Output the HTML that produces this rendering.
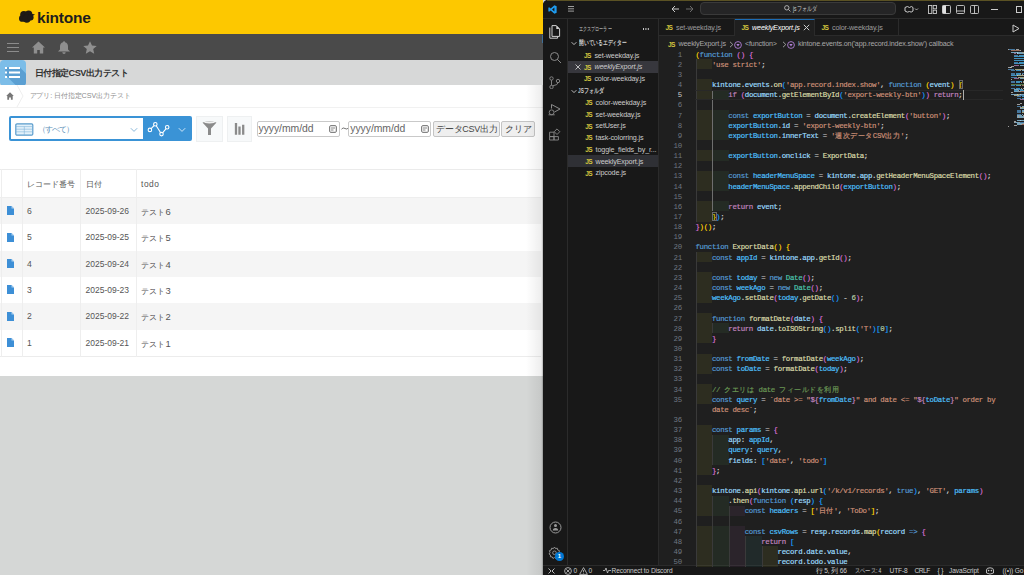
<!DOCTYPE html>
<html><head><meta charset="utf-8">
<style>
*{box-sizing:border-box;margin:0;padding:0}
html,body{width:1024px;height:575px;overflow:hidden;background:#d5d7d6;font-family:"Liberation Sans",sans-serif}
.a{position:absolute}
#kt{position:absolute;left:0;top:0;width:543px;height:575px;background:#d5d7d6;overflow:hidden}
#hdr{left:0;top:0;width:543px;height:34px;background:#fdc800}
#nav{left:0;top:34px;width:543px;height:26px;background:#4a4a4a}
#ttl{left:0;top:60px;width:543px;height:25px;background:#d7d8d8;overflow:hidden}
#wht{left:0;top:85px;width:543px;height:290.6px;background:#fff}
.bc{color:#9b9b9b;font-size:7.6px}
.tb td{}
.mono{font-family:"Liberation Mono",monospace}

#vs{position:absolute;left:543px;top:0;width:481px;height:575px;background:#1f1f1f;overflow:hidden;border-top-left-radius:5px}
.mono{font-family:"Liberation Mono",monospace}
.ln{left:655px;width:26.8px;text-align:right;font-size:7.400px;letter-spacing:-0.330px;line-height:10.15px;white-space:pre}
.ui{font-family:"Liberation Sans",sans-serif}
.jsi{font-family:"Liberation Sans",sans-serif;font-weight:bold;font-size:6.6px;line-height:7px;color:#d2c53f;letter-spacing:-.55px}
.sb{font-size:7.2px;color:#cccccc;letter-spacing:-.15px;white-space:nowrap}
.tb{font-size:7.2px;letter-spacing:-.15px;white-space:nowrap}
.bcr{font-size:7.15px;color:#a9a9a9;letter-spacing:-.15px;white-space:nowrap}
.st{top:567.1px;font-size:6.6px;color:#cccccc;white-space:nowrap;letter-spacing:-.1px}
.cl{-webkit-text-stroke:.18px;left:695.5px;font-size:7.400px;letter-spacing:-0.330px;line-height:10.15px;white-space:pre;color:#d4d4d4}
</style></head><body>
<div id="kt">
  <div id="hdr" class="a">
    <svg class="a" style="left:18px;top:10px" width="18" height="14" viewBox="0 0 18 14"><g fill="#1e1a16"><circle cx="5.8" cy="4.6" r="3.6"/><circle cx="10.6" cy="4.2" r="3.7"/><circle cx="4.4" cy="8.4" r="3.4"/><circle cx="8.8" cy="8.6" r="4.2"/><circle cx="12.6" cy="7.6" r="3"/><path d="M12.5 3.5L17 4.5 13 7Z"/></g></svg>
    <div class="a" style="left:37px;top:8.5px;font-size:15.5px;font-weight:bold;color:#1e1e1e;letter-spacing:-0.2px">kintone</div>
  </div>
  <div id="nav" class="a">
    <div class="a" style="left:7px;top:42.5px;margin-top:-34px;width:12px;height:1.5px;background:#8c8c8c;box-shadow:0 4px 0 #8c8c8c,0 8px 0 #8c8c8c"></div>
    <svg class="a" style="left:32px;top:7px" width="13" height="13" viewBox="0 0 13 13"><path d="M6.5 .5L0 6.5h1.8V12.5h3.4V9h2.6v3.5h3.4V6.5H13Z" fill="#8f8f8f"/></svg>
    <svg class="a" style="left:58px;top:7px" width="12" height="13" viewBox="0 0 12 13"><path d="M6 .3c.6 0 1 .4 1 .9 2 .5 3 2.2 3 4.2v3L12 10.5H0L2 8.4v-3c0-2 1-3.7 3-4.2 0-.5.4-.9 1-.9ZM4.3 11.3h3.4A1.7 1.7 0 0 1 4.3 11.3Z" fill="#8f8f8f"/></svg>
    <svg class="a" style="left:83px;top:6.5px" width="14" height="13" viewBox="0 0 14 13"><path d="M7 .3l2 4.2 4.7.5-3.5 3.1 1 4.6L7 10.3 2.8 12.7l1-4.6L.3 5l4.7-.5Z" fill="#8f8f8f"/></svg>
  </div>
  <div id="ttl" class="a">
    <div class="a" style="left:0;top:0;width:25.6px;height:25.5px;background:#7cbde8;border-radius:4px;overflow:hidden">
      <svg class="a" style="left:-4px;top:-4px" width="30" height="30" viewBox="0 0 30 30"><path d="M9.2 11.2H23.8L30 17.4V30H20.5L9.2 18.7Z" fill="#5b9fd2"/></svg>
      <div class="a" style="left:5.2px;top:7.2px;width:2.3px;height:2.3px;background:#fff;box-shadow:0 4.5px 0 #fff,0 9px 0 #fff"></div>
      <div class="a" style="left:8.8px;top:7.2px;width:11px;height:2.3px;background:#fff;box-shadow:0 4.5px 0 #fff,0 9px 0 #fff"></div>
    </div>
    <div class="a" style="left:34.8px;top:7.3px;font-size:9.2px;font-weight:bold;color:#333;letter-spacing:-0.55px">日付指定CSV出力テスト</div>
  </div>
  <div id="wht" class="a">
    <svg class="a" style="left:5.5px;top:7px" width="8" height="8" viewBox="0 0 8 8"><path d="M4 .3L.2 4H1.3V7.7H3.1V5.4H4.9V7.7H6.7V4H7.8Z" fill="#777"/></svg>
    <svg class="a" style="left:16px;top:0" width="9" height="22" viewBox="0 0 9 22"><path d="M1 0L7 11 1 22" fill="none" stroke="#eee" stroke-width="1"/></svg>
    <div class="a bc" style="left:29.5px;top:5.6px;font-size:7.2px;letter-spacing:-0.1px;color:#8c8c8c">アプリ: 日付指定CSV出力テスト</div>
    <div class="a" style="left:0;top:21.5px;width:543px;height:1px;background:#f1f1f1"></div>
    <!-- view selector -->
    <div class="a" style="left:8.6px;top:31px;width:183.6px;height:25.2px;background:#3a93d6;border-radius:2px"></div>
    <div class="a" style="left:11px;top:33.3px;width:132.1px;height:20.7px;background:#fff"></div>
    <svg class="a" style="left:15px;top:37.6px" width="19" height="13" viewBox="0 0 19 13"><rect x=".8" y=".8" width="17" height="11.4" rx="1.2" fill="#e3f1fa" stroke="#5a9ccc" stroke-width="1.2"/><path d="M.8 3.6H17.8M.8 6.2H17.8M.8 8.8H17.8M9.3 3.6V12.2" stroke="#7fb3d9" stroke-width=".6"/></svg>
    <div class="a" style="left:37.5px;top:38.6px;font-size:8.4px;color:#5d8fb8;letter-spacing:-.9px">（すべて）</div>
    <svg class="a" style="left:130px;top:42px" width="8" height="6" viewBox="0 0 8 6"><path d="M.8 1.2L4 4.4 7.2 1.2" fill="none" stroke="#8ab8da" stroke-width="1"/></svg>
    <svg class="a" style="left:147px;top:37px" width="24" height="15" viewBox="0 0 24 15"><path d="M2.9 7.9L8.3 2.3 14.5 12.1 20.2 5.3" fill="none" stroke="#fff" stroke-width="1.1"/><g fill="#3a93d6" stroke="#fff" stroke-width="1.1"><circle cx="2.9" cy="7.9" r="1.75"/><circle cx="8.3" cy="2.3" r="1.75"/><circle cx="14.5" cy="12.1" r="1.75"/><circle cx="20.2" cy="5.3" r="1.75"/></g></svg>
    <svg class="a" style="left:177.5px;top:42px" width="8" height="6" viewBox="0 0 8 6"><path d="M.8 1.2L4 4.4 7.2 1.2" fill="none" stroke="#cfe6f7" stroke-width="1"/></svg>
    <!-- filter & graph -->
    <div class="a" style="left:196px;top:31px;width:26.6px;height:25.5px;background:#f7f9fa;border:1px solid #eef0f1"></div>
    <svg class="a" style="left:202px;top:36px" width="15" height="15" viewBox="0 0 15 15"><path d="M.5 1.5Q7.5-.5 14.5 1.5L9 7.5V14H6V7.5Z" fill="#8b8b8b"/><ellipse cx="7.5" cy="1.6" rx="5.5" ry=".8" fill="#f2f2f2"/></svg>
    <div class="a" style="left:226.5px;top:31px;width:25.5px;height:25.5px;background:#f7f9fa;border:1px solid #eef0f1"></div>
    <svg class="a" style="left:233px;top:37px" width="12" height="14" viewBox="0 0 12 14"><path d="M3 1V12.7M6.5 4.4V12.7M10.2 2.7V12.7" stroke="#8b8b8b" stroke-width="2.3"/></svg>
    <!-- date inputs -->
    <div class="a" style="left:256.6px;top:35.5px;width:83px;height:16.3px;background:#fff;border:1px solid #c9c9c9;border-radius:2px"></div>
    <div class="a" style="left:258.5px;top:38.2px;font-size:10.4px;color:#666;letter-spacing:-.05px">yyyy/mm/dd</div>
    <svg class="a" style="left:329px;top:39.5px" width="8" height="8" viewBox="0 0 8 8"><rect x=".7" y=".7" width="6.6" height="6.6" rx="1" fill="none" stroke="#666" stroke-width="1"/><path d="M2 3H6M2 5H4.5" stroke="#666" stroke-width=".8"/></svg>
    <svg class="a" style="left:340.5px;top:41px" width="8" height="5" viewBox="0 0 8 5"><path d="M.5 3.2Q2 1 4 2.5T7.5 1.8" fill="none" stroke="#666" stroke-width=".9"/></svg>
    <div class="a" style="left:348.4px;top:35.5px;width:83px;height:16.3px;background:#fff;border:1px solid #c9c9c9;border-radius:2px"></div>
    <div class="a" style="left:350.3px;top:38.2px;font-size:10.4px;color:#666;letter-spacing:-.05px">yyyy/mm/dd</div>
    <svg class="a" style="left:421px;top:39.5px" width="8" height="8" viewBox="0 0 8 8"><rect x=".7" y=".7" width="6.6" height="6.6" rx="1" fill="none" stroke="#666" stroke-width="1"/><path d="M2 3H6M2 5H4.5" stroke="#666" stroke-width=".8"/></svg>
    <div class="a" style="left:432.9px;top:35.6px;width:67.4px;height:16px;background:#efefef;border:1px solid #c4c4c4;border-radius:2px"></div>
    <div class="a" style="left:436px;top:38.2px;font-size:9px;color:#444;letter-spacing:-.25px">データCSV出力</div>
    <div class="a" style="left:500.8px;top:35.6px;width:33.8px;height:16px;background:#efefef;border:1px solid #c4c4c4;border-radius:2px"></div>
    <div class="a" style="left:504.5px;top:38.2px;font-size:9px;color:#444">クリア</div>
    <!-- table -->
    <div class="a" style="left:0;top:83.5px;width:543px;height:1.5px;background:#ebebeb"></div>
    <div class="a" style="left:0;top:112.3px;width:541px;height:1px;background:#eeeeee"></div>
    <div class="a" style="left:27px;top:94px;font-size:7.8px;color:#555">レコード番号</div>
    <div class="a" style="left:85.5px;top:94px;font-size:7.8px;color:#555">日付</div>
    <div class="a" style="left:141px;top:93.7px;font-size:8.4px;color:#555;letter-spacing:.55px">todo</div>
    <div class="a" style="left:0;top:113.00px;width:541px;height:26.33px;background:#f5f5f5"></div>
    <svg class="a" style="left:6.5px;top:121.30px" width="7" height="9" viewBox="0 0 7 9"><path d="M0 0H4.5L7 2.5V9H0Z" fill="#3d8fd6"/><path d="M4.5 0V2.5H7" fill="#a9d0f0"/></svg>
    <div class="a" style="left:27px;top:121.00px;font-size:8.6px;color:#555">6</div>
    <div class="a" style="left:85.5px;top:121.10px;font-size:8.5px;color:#555">2025-09-26</div>
    <div class="a" style="left:141px;top:121.00px;font-size:7.8px;color:#555">テスト<span style="font-size:9.4px;margin-left:.5px">6</span></div>
    <div class="a" style="left:0;top:139.33px;width:541px;height:26.33px;background:#fff"></div>
    <svg class="a" style="left:6.5px;top:147.63px" width="7" height="9" viewBox="0 0 7 9"><path d="M0 0H4.5L7 2.5V9H0Z" fill="#3d8fd6"/><path d="M4.5 0V2.5H7" fill="#a9d0f0"/></svg>
    <div class="a" style="left:27px;top:147.33px;font-size:8.6px;color:#555">5</div>
    <div class="a" style="left:85.5px;top:147.43px;font-size:8.5px;color:#555">2025-09-25</div>
    <div class="a" style="left:141px;top:147.33px;font-size:7.8px;color:#555">テスト<span style="font-size:9.4px;margin-left:.5px">5</span></div>
    <div class="a" style="left:0;top:165.66px;width:541px;height:26.33px;background:#f5f5f5"></div>
    <svg class="a" style="left:6.5px;top:173.96px" width="7" height="9" viewBox="0 0 7 9"><path d="M0 0H4.5L7 2.5V9H0Z" fill="#3d8fd6"/><path d="M4.5 0V2.5H7" fill="#a9d0f0"/></svg>
    <div class="a" style="left:27px;top:173.66px;font-size:8.6px;color:#555">4</div>
    <div class="a" style="left:85.5px;top:173.76px;font-size:8.5px;color:#555">2025-09-24</div>
    <div class="a" style="left:141px;top:173.66px;font-size:7.8px;color:#555">テスト<span style="font-size:9.4px;margin-left:.5px">4</span></div>
    <div class="a" style="left:0;top:191.99px;width:541px;height:26.33px;background:#fff"></div>
    <svg class="a" style="left:6.5px;top:200.29px" width="7" height="9" viewBox="0 0 7 9"><path d="M0 0H4.5L7 2.5V9H0Z" fill="#3d8fd6"/><path d="M4.5 0V2.5H7" fill="#a9d0f0"/></svg>
    <div class="a" style="left:27px;top:199.99px;font-size:8.6px;color:#555">3</div>
    <div class="a" style="left:85.5px;top:200.09px;font-size:8.5px;color:#555">2025-09-23</div>
    <div class="a" style="left:141px;top:199.99px;font-size:7.8px;color:#555">テスト<span style="font-size:9.4px;margin-left:.5px">3</span></div>
    <div class="a" style="left:0;top:218.32px;width:541px;height:26.33px;background:#f5f5f5"></div>
    <svg class="a" style="left:6.5px;top:226.62px" width="7" height="9" viewBox="0 0 7 9"><path d="M0 0H4.5L7 2.5V9H0Z" fill="#3d8fd6"/><path d="M4.5 0V2.5H7" fill="#a9d0f0"/></svg>
    <div class="a" style="left:27px;top:226.32px;font-size:8.6px;color:#555">2</div>
    <div class="a" style="left:85.5px;top:226.42px;font-size:8.5px;color:#555">2025-09-22</div>
    <div class="a" style="left:141px;top:226.32px;font-size:7.8px;color:#555">テスト<span style="font-size:9.4px;margin-left:.5px">2</span></div>
    <div class="a" style="left:0;top:244.65px;width:541px;height:26.33px;background:#fff"></div>
    <svg class="a" style="left:6.5px;top:252.95px" width="7" height="9" viewBox="0 0 7 9"><path d="M0 0H4.5L7 2.5V9H0Z" fill="#3d8fd6"/><path d="M4.5 0V2.5H7" fill="#a9d0f0"/></svg>
    <div class="a" style="left:27px;top:252.65px;font-size:8.6px;color:#555">1</div>
    <div class="a" style="left:85.5px;top:252.75px;font-size:8.5px;color:#555">2025-09-21</div>
    <div class="a" style="left:141px;top:252.65px;font-size:7.8px;color:#555">テスト<span style="font-size:9.4px;margin-left:.5px">1</span></div>
    <div class="a" style="left:0;top:271px;width:541px;height:1px;background:#ececec"></div>
    <div class="a" style="left:0.5px;top:84px;width:1px;height:187.5px;background:#eeeeee"></div>
    <div class="a" style="left:22px;top:84px;width:1px;height:187.5px;background:#eeeeee"></div>
    <div class="a" style="left:79.8px;top:84px;width:1px;height:187.5px;background:#eeeeee"></div>
    <div class="a" style="left:136.2px;top:84px;width:1px;height:187.5px;background:#eeeeee"></div>
  </div>
  <div id="shd" class="a" style="left:526px;top:85px;width:17px;height:490px;background:linear-gradient(90deg,rgba(0,0,0,0),rgba(0,0,0,.065) 90%,rgba(0,0,0,.3) 100%)"></div>
</div>

<div id="vs"></div>
<div class="a" style="left:543px;top:0;width:481px;height:18.7px;background:#181818;border-bottom:1px solid #2b2b2b;border-top-left-radius:5px"></div>
<div class="a" style="left:547px;top:0;width:477px;height:1px;background:#5b5224"></div>
<svg class="a" style="left:547.5px;top:4.6px" width="9" height="9" viewBox="0 0 100 100"><path d="M71 3L96 15V85L71 97 30 60 12 74 4 70V30L12 26 30 40ZM71 28L45 50 71 72Z" fill="#1f9cf0"/></svg>
<div class="a" style="left:567.8px;top:6.2px;width:6.5px;height:1px;background:#9d9d9d;box-shadow:0 2.3px 0 #9d9d9d,0 4.6px 0 #9d9d9d"></div>
<svg class="a" style="left:671px;top:5px" width="9" height="8" viewBox="0 0 9 8"><path d="M8 4H1.2M4 1L1 4 4 7" fill="none" stroke="#cccccc" stroke-width="1"/></svg>
<svg class="a" style="left:685px;top:5px" width="9" height="8" viewBox="0 0 9 8"><path d="M1 4H7.8M5 1L8 4 5 7" fill="none" stroke="#6b6b6b" stroke-width="1"/></svg>
<div class="a" style="left:700.3px;top:2.2px;width:196px;height:13px;background:#252526;border:1px solid #3a3a3a;border-radius:4px"></div>
<svg class="a" style="left:783.5px;top:5.3px" width="7" height="7" viewBox="0 0 7 7"><circle cx="2.8" cy="2.8" r="2.2" fill="none" stroke="#bbb" stroke-width=".9"/><path d="M4.4 4.4L6.4 6.4" stroke="#bbb" stroke-width=".9"/></svg>
<div class="a ui" style="left:793px;top:4px;font-size:6.8px;color:#cccccc;transform:scaleX(.72);transform-origin:0 0;white-space:nowrap">jsフォルダ</div>
<svg class="a" style="left:903px;top:4.5px" width="16" height="9" viewBox="0 0 16 9"><path d="M2 2.5Q4.5 .5 6.5 2.5 8.5 .5 10 2.5V6Q8 8 6.5 6.5 4.5 8 2 6Z" fill="none" stroke="#cccccc" stroke-width="1"/><path d="M12 3.5L13.5 5 15 3.5" fill="none" stroke="#cccccc" stroke-width=".8"/></svg>
<svg class="a" style="left:927.5px;top:4.8px" width="9" height="9" viewBox="0 0 9 9"><rect x=".5" y=".5" width="3.3" height="8" fill="none" stroke="#ccc" stroke-width=".9"/><rect x="5.2" y=".5" width="3.3" height="3.3" fill="none" stroke="#ccc" stroke-width=".9"/><rect x="5.2" y="5.2" width="3.3" height="3.3" fill="none" stroke="#ccc" stroke-width=".9"/></svg>
<svg class="a" style="left:941.5px;top:4.8px" width="9" height="9" viewBox="0 0 9 9"><rect x=".5" y=".5" width="8" height="8" rx="1" fill="none" stroke="#ccc" stroke-width=".9"/><rect x=".5" y=".5" width="3.5" height="8" fill="#e0e0e0"/></svg>
<svg class="a" style="left:955.5px;top:4.8px" width="9" height="9" viewBox="0 0 9 9"><rect x=".5" y=".5" width="8" height="8" rx="1" fill="none" stroke="#ccc" stroke-width=".9"/><path d="M.5 6H8.5" stroke="#ccc" stroke-width=".9"/></svg>
<svg class="a" style="left:969.5px;top:4.8px" width="9" height="9" viewBox="0 0 9 9"><rect x=".5" y=".5" width="8" height="8" rx="1" fill="none" stroke="#ccc" stroke-width=".9"/><path d="M4.5 .5V8.5" stroke="#ccc" stroke-width=".9"/></svg>
<div class="a" style="left:990.5px;top:8.5px;width:7px;height:.9px;background:#ccc"></div>
<div class="a" style="left:1015.7px;top:6px;width:6.5px;height:6.5px;border:.9px solid #ccc"></div>
<div class="a" style="left:543px;top:18.7px;width:24.6px;height:547px;background:#181818;border-right:1px solid #2b2b2b"></div>
<div class="a" style="left:542.3px;top:34.6px;width:1px;height:8.5px;background:#3f6f98"></div>
<svg class="a" style="left:548px;top:24.5px" width="13" height="14" viewBox="0 0 13 14"><path d="M4 .6H8.3L11.6 3.9V11.4H4Z" fill="none" stroke="#d0d0d0" stroke-width="1"/><path d="M8.3 .6V3.9H11.6Z" fill="#d0d0d0"/><path d="M1.8 2.6V13.2H9.6V11.4" fill="none" stroke="#d0d0d0" stroke-width="1"/></svg>
<svg class="a" style="left:548.5px;top:50.5px" width="13" height="13" viewBox="0 0 13 13"><circle cx="5.5" cy="5.5" r="4" fill="none" stroke="#8b8b8b" stroke-width="1"/><path d="M8.3 8.3L12 12" stroke="#8b8b8b" stroke-width="1"/></svg>
<svg class="a" style="left:548px;top:76px" width="13" height="13" viewBox="0 0 13 13"><circle cx="3.5" cy="2.5" r="1.7" fill="none" stroke="#8b8b8b" stroke-width=".9"/><circle cx="3.5" cy="11" r="1.7" fill="none" stroke="#8b8b8b" stroke-width=".9"/><circle cx="10" cy="5" r="1.7" fill="none" stroke="#8b8b8b" stroke-width=".9"/><path d="M3.5 4.2V9.3M10 6.7Q10 9 4.8 9.8" fill="none" stroke="#8b8b8b" stroke-width=".9"/></svg>
<svg class="a" style="left:548px;top:103px" width="13" height="13" viewBox="0 0 13 13"><path d="M3.5 5.5V1.5L12 6 6.5 9" fill="none" stroke="#8b8b8b" stroke-width="1"/><circle cx="3.6" cy="9.3" r="2.4" fill="none" stroke="#8b8b8b" stroke-width=".9"/><path d="M.5 11.8H6.7" stroke="#8b8b8b" stroke-width=".9"/></svg>
<svg class="a" style="left:548px;top:127.5px" width="13" height="13" viewBox="0 0 13 13"><path d="M1.6 4.2H6V8.6H1.6ZM6 8.6H10.4V12H6ZM1.6 8.6H6V12H1.6ZM9 .9L11.8 3.7 9 6.5 6.2 3.7Z" fill="none" stroke="#8b8b8b" stroke-width=".9"/></svg>
<svg class="a" style="left:548.5px;top:520.5px" width="13" height="13" viewBox="0 0 13 13"><circle cx="6.5" cy="6.5" r="5.5" fill="none" stroke="#9a9a9a" stroke-width="1"/><circle cx="6.5" cy="4.6" r="1.5" fill="#9a9a9a"/><path d="M3.8 9.5Q3.8 7 6.5 7 9.2 7 9.2 9.5Z" fill="#9a9a9a"/></svg>
<svg class="a" style="left:548px;top:545.5px" width="13" height="13" viewBox="0 0 13 13"><path d="M6.5 1L7.5 2.6 9.3 2.2 9.7 4 11.5 4.7 11 6.5 12 8 10.4 9 10.5 10.8 8.7 10.9 7.9 12.5 6.5 11.4 5 12.5 4.2 10.9 2.4 10.8 2.5 9 1 8 2 6.5 1.4 4.7 3.2 4 3.6 2.2 5.4 2.6Z" fill="none" stroke="#9a9a9a" stroke-width=".9"/><circle cx="6.5" cy="6.8" r="1.8" fill="none" stroke="#9a9a9a" stroke-width=".9"/></svg>
<div class="a" style="left:554.8px;top:551.8px;width:9.2px;height:9.2px;border-radius:50%;background:#0078d4;color:#fff;font-size:6px;font-weight:bold;text-align:center;line-height:9.2px" class="ui">1</div>
<div class="a" style="left:568px;top:18.7px;width:90.6px;height:547px;background:#181818;border-right:1px solid #2b2b2b"></div>
<div class="a ui" style="left:578.8px;top:25px;font-size:6.2px;color:#cccccc;transform:scaleX(.68);transform-origin:0 0;white-space:nowrap">エクスプローラー</div>
<div class="a" style="left:643.3px;top:28.4px;width:1.2px;height:1.2px;background:#ccc;box-shadow:2.4px 0 0 #ccc,4.8px 0 0 #ccc"></div>
<svg class="a" style="left:570.5px;top:41px" width="6" height="5" viewBox="0 0 6 5"><path d="M.6 1.2L3 3.6 5.4 1.2" fill="none" stroke="#cccccc" stroke-width=".9"/></svg>
<div class="a ui" style="left:578.8px;top:39.3px;font-size:6.6px;font-weight:bold;color:#cccccc;transform:scaleX(.68);transform-origin:0 0;white-space:nowrap">開いているエディター</div>
<div class="a" style="left:568px;top:61px;width:90px;height:11.9px;background:#37373d"></div>
<svg class="a" style="left:574.5px;top:64px" width="6" height="6" viewBox="0 0 6 6"><path d="M.5 .5L5.5 5.5M5.5 .5L.5 5.5" stroke="#cccccc" stroke-width=".9"/></svg>
<div class="a jsi" style="left:584px;top:52.400000000000006px">JS</div>
<div class="a ui sb" style="left:594.4px;top:51.10px;">set-weekday.js</div>
<div class="a jsi" style="left:584px;top:63.7px">JS</div>
<div class="a ui sb" style="left:594.4px;top:62.40px;font-style:italic;">weeklyExport.js</div>
<div class="a jsi" style="left:584px;top:75.3px">JS</div>
<div class="a ui sb" style="left:594.4px;top:74.00px;">color-weekday.js</div>
<svg class="a" style="left:570.5px;top:89px" width="6" height="5" viewBox="0 0 6 5"><path d="M.6 1.2L3 3.6 5.4 1.2" fill="none" stroke="#cccccc" stroke-width=".9"/></svg>
<div class="a ui" style="left:578.3px;top:87.3px;font-size:6.6px;font-weight:bold;color:#cccccc;transform:scaleX(.72);transform-origin:0 0;white-space:nowrap">JSフォルダ</div>
<div class="a" style="left:568px;top:155.1px;width:90px;height:11.9px;background:#2f3035"></div>
<div class="a jsi" style="left:585.2px;top:99.3px">JS</div>
<div class="a ui sb" style="left:595.6px;top:98.00px">color-weekday.js</div>
<div class="a jsi" style="left:585.2px;top:111.03px">JS</div>
<div class="a ui sb" style="left:595.6px;top:109.73px">set-weekday.js</div>
<div class="a jsi" style="left:585.2px;top:122.76px">JS</div>
<div class="a ui sb" style="left:595.6px;top:121.46px">setUser.js</div>
<div class="a jsi" style="left:585.2px;top:134.48999999999998px">JS</div>
<div class="a ui sb" style="left:595.6px;top:133.19px">task-colorring.js</div>
<div class="a jsi" style="left:585.2px;top:146.21999999999997px">JS</div>
<div class="a ui sb" style="left:595.6px;top:144.92px">toggle_fields_by_r...</div>
<div class="a jsi" style="left:585.2px;top:157.95px">JS</div>
<div class="a ui sb" style="left:595.6px;top:156.65px">weeklyExport.js</div>
<div class="a jsi" style="left:585.2px;top:169.67999999999998px">JS</div>
<div class="a ui sb" style="left:595.6px;top:168.38px">zipcode.js</div>
<div class="a" style="left:658.6px;top:18.7px;width:365.4px;height:17px;background:#181818;border-bottom:1px solid #2b2b2b"></div>
<div class="a" style="left:658.6px;top:18.7px;width:76.7px;height:17px;border-right:1px solid #2b2b2b"></div>
<div class="a" style="left:735.3px;top:18.7px;width:80px;height:17px;background:#1f1f1f;border-top:1px solid #1c6cb5;border-right:1px solid #2b2b2b"></div>
<div class="a" style="left:815.3px;top:18.7px;width:83.5px;height:17px;border-right:1px solid #2b2b2b"></div>
<div class="a jsi" style="left:665.5px;top:23.8px">JS</div>
<div class="a ui tb" style="left:676px;top:22.5px;color:#9d9d9d">set-weekday.js</div>
<div class="a jsi" style="left:741.5px;top:23.8px">JS</div>
<div class="a ui tb" style="left:752px;top:22.5px;color:#ffffff;font-style:italic">weeklyExport.js</div>
<svg class="a" style="left:802.5px;top:24.3px" width="7" height="7" viewBox="0 0 7 7"><path d="M.8 .8L6.2 6.2M6.2 .8L.8 6.2" stroke="#cccccc" stroke-width="1"/></svg>
<div class="a jsi" style="left:821.5px;top:23.8px">JS</div>
<div class="a ui tb" style="left:832px;top:22.5px;color:#9d9d9d">color-weekday.js</div>
<svg class="a" style="left:1012px;top:23.5px" width="8" height="9" viewBox="0 0 8 9"><path d="M1 1L7 4.5 1 8Z" fill="none" stroke="#cccccc" stroke-width="1"/></svg>
<div class="a jsi" style="left:668px;top:41.2px">JS</div>
<div class="a ui bcr" style="left:678.5px;top:40.2px">weeklyExport.js</div>
<svg class="a" style="left:728.6px;top:40.6px" width="5" height="7" viewBox="0 0 5 7"><path d="M1 .8L3.8 3.5 1 6.2" fill="none" stroke="#a9a9a9" stroke-width=".9"/></svg>
<svg class="a" style="left:734px;top:40.6px" width="8" height="8" viewBox="0 0 8 8"><circle cx="4" cy="4" r="3.4" fill="none" stroke="#b180d7" stroke-width=".9"/><path d="M2.3 3H5.7L4 5.5Z" fill="#b180d7"/></svg>
<div class="a ui bcr" style="left:745px;top:40.2px">&lt;function&gt;</div>
<svg class="a" style="left:781.6px;top:40.6px" width="5" height="7" viewBox="0 0 5 7"><path d="M1 .8L3.8 3.5 1 6.2" fill="none" stroke="#a9a9a9" stroke-width=".9"/></svg>
<svg class="a" style="left:787px;top:40.6px" width="8" height="8" viewBox="0 0 8 8"><circle cx="4" cy="4" r="3.4" fill="none" stroke="#b180d7" stroke-width=".9"/><path d="M2.3 3H5.7L4 5.5Z" fill="#b180d7"/></svg>
<div class="a ui bcr" style="left:798px;top:40.2px">kintone.events.on('app.record.index.show') callback</div>
<div class="a" style="left:543px;top:565.4px;width:481px;height:9.6px;background:#181818;border-top:1px solid #2b2b2b"></div>
<svg class="a" style="left:547.5px;top:567.5px" width="7" height="6" viewBox="0 0 7 6"><path d="M.5 5.5L3 3 .5 .5M6.5 .5L4 3 6.5 5.5" fill="none" stroke="#ccc" stroke-width=".9"/></svg>
<svg class="a" style="left:564px;top:566.8px" width="8" height="8" viewBox="0 0 8 8"><circle cx="4" cy="4" r="3.4" fill="none" stroke="#ccc" stroke-width=".8"/><path d="M2.3 2.3L5.7 5.7M5.7 2.3L2.3 5.7" stroke="#ccc" stroke-width=".8"/></svg>
<div class="a ui st" style="left:573.5px">0</div>
<svg class="a" style="left:578.5px;top:566.6px" width="9" height="8" viewBox="0 0 9 8"><path d="M4.5 .6L8.4 7.4H.6Z" fill="none" stroke="#ccc" stroke-width=".8"/><path d="M4.5 3V5.3M4.5 6V6.6" stroke="#ccc" stroke-width=".7"/></svg>
<div class="a ui st" style="left:588.5px">0</div>
<svg class="a" style="left:602.5px;top:567.3px" width="8" height="7" viewBox="0 0 8 7"><path d="M0 3.5H2L3 1 4.5 6 5.5 3.5H8" fill="none" stroke="#ccc" stroke-width=".8"/></svg>
<div class="a ui st" style="left:611.5px">Reconnect to Discord</div>
<div class="a ui st" style="left:815.5px">行 5, 列 66</div>
<div class="a ui st" style="left:855px;transform:scaleX(.76);transform-origin:0 0">スペース: 4</div>
<div class="a ui st" style="left:889.5px">UTF-8</div>
<div class="a ui st" style="left:914.5px;letter-spacing:-.5px">CRLF</div>
<div class="a ui st" style="left:937.5px">{ }</div>
<div class="a ui st" style="left:949px">JavaScript</div>
<svg class="a" style="left:985px;top:566.5px" width="10" height="8" viewBox="0 0 10 8"><path d="M1.5 3Q1.5 .8 5 .8 8.5 .8 8.5 3V6Q5 8.2 1.5 6Z" fill="none" stroke="#ccc" stroke-width=".9"/><circle cx="3.6" cy="3.6" r=".8" fill="#ccc"/><circle cx="6.4" cy="3.6" r=".8" fill="#ccc"/></svg>
<div class="a ui st" style="left:1002.5px">((•)) Go</div><div class="a mono ln" style="top:49.60px;color:#6e7681">1</div>
<div class="a mono cl" style="top:49.60px"><span style="color:#ffd700">(</span><span style="color:#569cd6">function</span> <span style="color:#da70d6">(</span><span style="color:#da70d6">)</span> <span style="color:#da70d6">{</span></div>
<div class="a" style="left:696.00px;top:59px;width:16.44px;height:10px;background:rgba(255,255,64,0.065)"></div>
<div class="a" style="left:696px;top:59px;width:1px;height:10px;background:#3a3a3a"></div>
<div class="a mono ln" style="top:59.75px;color:#6e7681">2</div>
<div class="a mono cl" style="top:59.75px">    <span style="color:#ce9178">&#x27;use strict&#x27;</span>;</div>
<div class="a" style="left:696px;top:69px;width:1px;height:10px;background:#3a3a3a"></div>
<div class="a mono ln" style="top:69.90px;color:#6e7681">3</div>
<div class="a mono cl" style="top:69.90px"></div>
<div class="a" style="left:696.00px;top:79px;width:16.44px;height:11px;background:rgba(255,255,64,0.065)"></div>
<div class="a" style="left:696px;top:79px;width:1px;height:11px;background:#3a3a3a"></div>
<div class="a mono ln" style="top:80.05px;color:#6e7681">4</div>
<div class="a mono cl" style="top:80.05px">    <span style="color:#9cdcfe">kintone</span>.<span style="color:#9cdcfe">events</span>.<span style="color:#dcdcaa">on</span><span style="color:#179fff">(</span><span style="color:#ce9178">&#x27;app.record.index.show&#x27;</span>, <span style="color:#569cd6">function</span> <span style="color:#ffd700">(</span><span style="color:#9cdcfe">event</span><span style="color:#ffd700">)</span> <span style="color:#ffd700">{</span></div>
<div class="a" style="left:696.00px;top:90px;width:16.44px;height:10px;background:rgba(255,255,64,0.065)"></div>
<div class="a" style="left:712.44px;top:90px;width:16.44px;height:10px;background:rgba(127,255,127,0.055)"></div>
<div class="a" style="left:696px;top:90px;width:1px;height:10px;background:#3a3a3a"></div>
<div class="a" style="left:712px;top:90px;width:1px;height:10px;background:#6e6e6e"></div>
<div class="a mono ln" style="top:90.20px;color:#cccccc">5</div>
<div class="a mono cl" style="top:90.20px">        <span style="color:#c586c0">if</span> <span style="color:#da70d6">(</span><span style="color:#9cdcfe">document</span>.<span style="color:#dcdcaa">getElementById</span><span style="color:#179fff">(</span><span style="color:#ce9178">&#x27;export-weekly-btn&#x27;</span><span style="color:#179fff">)</span><span style="color:#da70d6">)</span> <span style="color:#c586c0">return</span>;</div>
<div class="a" style="left:696px;top:100px;width:1px;height:10px;background:#3a3a3a"></div>
<div class="a" style="left:712px;top:100px;width:1px;height:10px;background:#6e6e6e"></div>
<div class="a mono ln" style="top:100.35px;color:#6e7681">6</div>
<div class="a mono cl" style="top:100.35px"></div>
<div class="a" style="left:696.00px;top:110px;width:16.44px;height:10px;background:rgba(255,255,64,0.065)"></div>
<div class="a" style="left:712.44px;top:110px;width:16.44px;height:10px;background:rgba(127,255,127,0.055)"></div>
<div class="a" style="left:696px;top:110px;width:1px;height:10px;background:#3a3a3a"></div>
<div class="a" style="left:712px;top:110px;width:1px;height:10px;background:#6e6e6e"></div>
<div class="a mono ln" style="top:110.50px;color:#6e7681">7</div>
<div class="a mono cl" style="top:110.50px">        <span style="color:#569cd6">const</span> <span style="color:#4fc1ff">exportButton</span> = <span style="color:#9cdcfe">document</span>.<span style="color:#dcdcaa">createElement</span><span style="color:#da70d6">(</span><span style="color:#ce9178">&#x27;button&#x27;</span><span style="color:#da70d6">)</span>;</div>
<div class="a" style="left:696.00px;top:120px;width:16.44px;height:10px;background:rgba(255,255,64,0.065)"></div>
<div class="a" style="left:712.44px;top:120px;width:16.44px;height:10px;background:rgba(127,255,127,0.055)"></div>
<div class="a" style="left:696px;top:120px;width:1px;height:10px;background:#3a3a3a"></div>
<div class="a" style="left:712px;top:120px;width:1px;height:10px;background:#6e6e6e"></div>
<div class="a mono ln" style="top:120.65px;color:#6e7681">8</div>
<div class="a mono cl" style="top:120.65px">        <span style="color:#4fc1ff">exportButton</span>.<span style="color:#9cdcfe">id</span> = <span style="color:#ce9178">&#x27;export-weekly-btn&#x27;</span>;</div>
<div class="a" style="left:696.00px;top:130px;width:16.44px;height:10px;background:rgba(255,255,64,0.065)"></div>
<div class="a" style="left:712.44px;top:130px;width:16.44px;height:10px;background:rgba(127,255,127,0.055)"></div>
<div class="a" style="left:696px;top:130px;width:1px;height:10px;background:#3a3a3a"></div>
<div class="a" style="left:712px;top:130px;width:1px;height:10px;background:#6e6e6e"></div>
<div class="a mono ln" style="top:130.80px;color:#6e7681">9</div>
<div class="a mono cl" style="top:130.80px">        <span style="color:#4fc1ff">exportButton</span>.<span style="color:#9cdcfe">innerText</span> = <span style="color:#ce9178">&#x27;<span style="letter-spacing:.55px">週次データ</span>CSV<span style="letter-spacing:.55px">出力</span>&#x27;</span>;</div>
<div class="a" style="left:696px;top:140px;width:1px;height:10px;background:#3a3a3a"></div>
<div class="a" style="left:712px;top:140px;width:1px;height:10px;background:#6e6e6e"></div>
<div class="a mono ln" style="top:140.95px;color:#6e7681">10</div>
<div class="a mono cl" style="top:140.95px"></div>
<div class="a" style="left:696.00px;top:150px;width:16.44px;height:11px;background:rgba(255,255,64,0.065)"></div>
<div class="a" style="left:712.44px;top:150px;width:16.44px;height:11px;background:rgba(127,255,127,0.055)"></div>
<div class="a" style="left:696px;top:150px;width:1px;height:11px;background:#3a3a3a"></div>
<div class="a" style="left:712px;top:150px;width:1px;height:11px;background:#6e6e6e"></div>
<div class="a mono ln" style="top:151.10px;color:#6e7681">11</div>
<div class="a mono cl" style="top:151.10px">        <span style="color:#4fc1ff">exportButton</span>.<span style="color:#9cdcfe">onclick</span> = <span style="color:#dcdcaa">ExportData</span>;</div>
<div class="a" style="left:696px;top:161px;width:1px;height:10px;background:#3a3a3a"></div>
<div class="a" style="left:712px;top:161px;width:1px;height:10px;background:#6e6e6e"></div>
<div class="a mono ln" style="top:161.25px;color:#6e7681">12</div>
<div class="a mono cl" style="top:161.25px"></div>
<div class="a" style="left:696.00px;top:171px;width:16.44px;height:10px;background:rgba(255,255,64,0.065)"></div>
<div class="a" style="left:712.44px;top:171px;width:16.44px;height:10px;background:rgba(127,255,127,0.055)"></div>
<div class="a" style="left:696px;top:171px;width:1px;height:10px;background:#3a3a3a"></div>
<div class="a" style="left:712px;top:171px;width:1px;height:10px;background:#6e6e6e"></div>
<div class="a mono ln" style="top:171.40px;color:#6e7681">13</div>
<div class="a mono cl" style="top:171.40px">        <span style="color:#569cd6">const</span> <span style="color:#4fc1ff">headerMenuSpace</span> = <span style="color:#9cdcfe">kintone</span>.<span style="color:#9cdcfe">app</span>.<span style="color:#dcdcaa">getHeaderMenuSpaceElement</span><span style="color:#da70d6">(</span><span style="color:#da70d6">)</span>;</div>
<div class="a" style="left:696.00px;top:181px;width:16.44px;height:10px;background:rgba(255,255,64,0.065)"></div>
<div class="a" style="left:712.44px;top:181px;width:16.44px;height:10px;background:rgba(127,255,127,0.055)"></div>
<div class="a" style="left:696px;top:181px;width:1px;height:10px;background:#3a3a3a"></div>
<div class="a" style="left:712px;top:181px;width:1px;height:10px;background:#6e6e6e"></div>
<div class="a mono ln" style="top:181.55px;color:#6e7681">14</div>
<div class="a mono cl" style="top:181.55px">        <span style="color:#4fc1ff">headerMenuSpace</span>.<span style="color:#dcdcaa">appendChild</span><span style="color:#da70d6">(</span><span style="color:#4fc1ff">exportButton</span><span style="color:#da70d6">)</span>;</div>
<div class="a" style="left:696px;top:191px;width:1px;height:10px;background:#3a3a3a"></div>
<div class="a" style="left:712px;top:191px;width:1px;height:10px;background:#6e6e6e"></div>
<div class="a mono ln" style="top:191.70px;color:#6e7681">15</div>
<div class="a mono cl" style="top:191.70px"></div>
<div class="a" style="left:696.00px;top:201px;width:16.44px;height:10px;background:rgba(255,255,64,0.065)"></div>
<div class="a" style="left:712.44px;top:201px;width:16.44px;height:10px;background:rgba(127,255,127,0.055)"></div>
<div class="a" style="left:696px;top:201px;width:1px;height:10px;background:#3a3a3a"></div>
<div class="a" style="left:712px;top:201px;width:1px;height:10px;background:#6e6e6e"></div>
<div class="a mono ln" style="top:201.85px;color:#6e7681">16</div>
<div class="a mono cl" style="top:201.85px">        <span style="color:#c586c0">return</span> <span style="color:#9cdcfe">event</span>;</div>
<div class="a" style="left:696.00px;top:211px;width:16.44px;height:11px;background:rgba(255,255,64,0.065)"></div>
<div class="a" style="left:696px;top:211px;width:1px;height:11px;background:#3a3a3a"></div>
<div class="a mono ln" style="top:212.00px;color:#6e7681">17</div>
<div class="a mono cl" style="top:212.00px">    <span style="color:#ffd700">}</span><span style="color:#179fff">)</span>;</div>
<div class="a mono ln" style="top:222.15px;color:#6e7681">18</div>
<div class="a mono cl" style="top:222.15px"><span style="color:#da70d6">}</span><span style="color:#ffd700">)</span><span style="color:#ffd700">(</span><span style="color:#ffd700">)</span>;</div>
<div class="a mono ln" style="top:232.30px;color:#6e7681">19</div>
<div class="a mono cl" style="top:232.30px"></div>
<div class="a mono ln" style="top:242.45px;color:#6e7681">20</div>
<div class="a mono cl" style="top:242.45px"><span style="color:#569cd6">function</span> <span style="color:#dcdcaa">ExportData</span><span style="color:#ffd700">(</span><span style="color:#ffd700">)</span> <span style="color:#ffd700">{</span></div>
<div class="a" style="left:696.00px;top:252px;width:16.44px;height:10px;background:rgba(255,255,64,0.065)"></div>
<div class="a" style="left:696px;top:252px;width:1px;height:10px;background:#3a3a3a"></div>
<div class="a mono ln" style="top:252.60px;color:#6e7681">21</div>
<div class="a mono cl" style="top:252.60px">    <span style="color:#569cd6">const</span> <span style="color:#4fc1ff">appId</span> = <span style="color:#9cdcfe">kintone</span>.<span style="color:#9cdcfe">app</span>.<span style="color:#dcdcaa">getId</span><span style="color:#da70d6">(</span><span style="color:#da70d6">)</span>;</div>
<div class="a" style="left:696px;top:262px;width:1px;height:10px;background:#3a3a3a"></div>
<div class="a mono ln" style="top:262.75px;color:#6e7681">22</div>
<div class="a mono cl" style="top:262.75px"></div>
<div class="a" style="left:696.00px;top:272px;width:16.44px;height:10px;background:rgba(255,255,64,0.065)"></div>
<div class="a" style="left:696px;top:272px;width:1px;height:10px;background:#3a3a3a"></div>
<div class="a mono ln" style="top:272.90px;color:#6e7681">23</div>
<div class="a mono cl" style="top:272.90px">    <span style="color:#569cd6">const</span> <span style="color:#4fc1ff">today</span> = <span style="color:#569cd6">new</span> <span style="color:#4ec9b0">Date</span><span style="color:#da70d6">(</span><span style="color:#da70d6">)</span>;</div>
<div class="a" style="left:696.00px;top:282px;width:16.44px;height:11px;background:rgba(255,255,64,0.065)"></div>
<div class="a" style="left:696px;top:282px;width:1px;height:11px;background:#3a3a3a"></div>
<div class="a mono ln" style="top:283.05px;color:#6e7681">24</div>
<div class="a mono cl" style="top:283.05px">    <span style="color:#569cd6">const</span> <span style="color:#4fc1ff">weekAgo</span> = <span style="color:#569cd6">new</span> <span style="color:#4ec9b0">Date</span><span style="color:#da70d6">(</span><span style="color:#da70d6">)</span>;</div>
<div class="a" style="left:696.00px;top:293px;width:16.44px;height:10px;background:rgba(255,255,64,0.065)"></div>
<div class="a" style="left:696px;top:293px;width:1px;height:10px;background:#3a3a3a"></div>
<div class="a mono ln" style="top:293.20px;color:#6e7681">25</div>
<div class="a mono cl" style="top:293.20px">    <span style="color:#4fc1ff">weekAgo</span>.<span style="color:#dcdcaa">setDate</span><span style="color:#da70d6">(</span><span style="color:#4fc1ff">today</span>.<span style="color:#dcdcaa">getDate</span><span style="color:#179fff">(</span><span style="color:#179fff">)</span> - <span style="color:#b5cea8">6</span><span style="color:#da70d6">)</span>;</div>
<div class="a" style="left:696px;top:303px;width:1px;height:10px;background:#3a3a3a"></div>
<div class="a mono ln" style="top:303.35px;color:#6e7681">26</div>
<div class="a mono cl" style="top:303.35px"></div>
<div class="a" style="left:696.00px;top:313px;width:16.44px;height:10px;background:rgba(255,255,64,0.065)"></div>
<div class="a" style="left:696px;top:313px;width:1px;height:10px;background:#3a3a3a"></div>
<div class="a mono ln" style="top:313.50px;color:#6e7681">27</div>
<div class="a mono cl" style="top:313.50px">    <span style="color:#569cd6">function</span> <span style="color:#dcdcaa">formatDate</span><span style="color:#da70d6">(</span><span style="color:#9cdcfe">date</span><span style="color:#da70d6">)</span> <span style="color:#da70d6">{</span></div>
<div class="a" style="left:696.00px;top:323px;width:16.44px;height:10px;background:rgba(255,255,64,0.065)"></div>
<div class="a" style="left:712.44px;top:323px;width:16.44px;height:10px;background:rgba(127,255,127,0.055)"></div>
<div class="a" style="left:696px;top:323px;width:1px;height:10px;background:#3a3a3a"></div>
<div class="a" style="left:712px;top:323px;width:1px;height:10px;background:#3a3a3a"></div>
<div class="a mono ln" style="top:323.65px;color:#6e7681">28</div>
<div class="a mono cl" style="top:323.65px">        <span style="color:#c586c0">return</span> <span style="color:#9cdcfe">date</span>.<span style="color:#dcdcaa">toISOString</span><span style="color:#179fff">(</span><span style="color:#179fff">)</span>.<span style="color:#dcdcaa">split</span><span style="color:#179fff">(</span><span style="color:#ce9178">&#x27;T&#x27;</span><span style="color:#179fff">)</span><span style="color:#179fff">[</span><span style="color:#b5cea8">0</span><span style="color:#179fff">]</span>;</div>
<div class="a" style="left:696.00px;top:333px;width:16.44px;height:10px;background:rgba(255,255,64,0.065)"></div>
<div class="a" style="left:696px;top:333px;width:1px;height:10px;background:#3a3a3a"></div>
<div class="a mono ln" style="top:333.80px;color:#6e7681">29</div>
<div class="a mono cl" style="top:333.80px">    <span style="color:#da70d6">}</span></div>
<div class="a" style="left:696px;top:343px;width:1px;height:11px;background:#3a3a3a"></div>
<div class="a mono ln" style="top:343.95px;color:#6e7681">30</div>
<div class="a mono cl" style="top:343.95px"></div>
<div class="a" style="left:696.00px;top:354px;width:16.44px;height:10px;background:rgba(255,255,64,0.065)"></div>
<div class="a" style="left:696px;top:354px;width:1px;height:10px;background:#3a3a3a"></div>
<div class="a mono ln" style="top:354.10px;color:#6e7681">31</div>
<div class="a mono cl" style="top:354.10px">    <span style="color:#569cd6">const</span> <span style="color:#4fc1ff">fromDate</span> = <span style="color:#dcdcaa">formatDate</span><span style="color:#da70d6">(</span><span style="color:#4fc1ff">weekAgo</span><span style="color:#da70d6">)</span>;</div>
<div class="a" style="left:696.00px;top:364px;width:16.44px;height:10px;background:rgba(255,255,64,0.065)"></div>
<div class="a" style="left:696px;top:364px;width:1px;height:10px;background:#3a3a3a"></div>
<div class="a mono ln" style="top:364.25px;color:#6e7681">32</div>
<div class="a mono cl" style="top:364.25px">    <span style="color:#569cd6">const</span> <span style="color:#4fc1ff">toDate</span> = <span style="color:#dcdcaa">formatDate</span><span style="color:#da70d6">(</span><span style="color:#4fc1ff">today</span><span style="color:#da70d6">)</span>;</div>
<div class="a" style="left:696px;top:374px;width:1px;height:10px;background:#3a3a3a"></div>
<div class="a mono ln" style="top:374.40px;color:#6e7681">33</div>
<div class="a mono cl" style="top:374.40px"></div>
<div class="a" style="left:696.00px;top:384px;width:16.44px;height:10px;background:rgba(255,255,64,0.065)"></div>
<div class="a" style="left:696px;top:384px;width:1px;height:10px;background:#3a3a3a"></div>
<div class="a mono ln" style="top:384.55px;color:#6e7681">34</div>
<div class="a mono cl" style="top:384.55px">    <span style="color:#6a9955">// <span style="letter-spacing:.55px">クエリは</span> date <span style="letter-spacing:.55px">フィールドを利用</span></span></div>
<div class="a" style="left:696.00px;top:394px;width:16.44px;height:10px;background:rgba(255,255,64,0.065)"></div>
<div class="a" style="left:696px;top:394px;width:1px;height:10px;background:#3a3a3a"></div>
<div class="a mono ln" style="top:394.70px;color:#6e7681">35</div>
<div class="a mono cl" style="top:394.70px">    <span style="color:#569cd6">const</span> <span style="color:#4fc1ff">query</span> = <span style="color:#ce9178">`date &gt;= &quot;</span><span style="color:#c586c0">${</span><span style="color:#4fc1ff">fromDate</span><span style="color:#c586c0">}</span><span style="color:#ce9178">&quot; and date &lt;= &quot;</span><span style="color:#c586c0">${</span><span style="color:#4fc1ff">toDate</span><span style="color:#c586c0">}</span><span style="color:#ce9178">&quot; order by </span></div>
<div class="a" style="left:696px;top:404px;width:1px;height:10px;background:#3a3a3a"></div>
<div class="a mono cl" style="top:404.85px">    <span style="color:#ce9178">date desc`</span>;</div>
<div class="a" style="left:696px;top:414px;width:1px;height:11px;background:#3a3a3a"></div>
<div class="a mono ln" style="top:415.00px;color:#6e7681">36</div>
<div class="a mono cl" style="top:415.00px"></div>
<div class="a" style="left:696.00px;top:425px;width:16.44px;height:10px;background:rgba(255,255,64,0.065)"></div>
<div class="a" style="left:696px;top:425px;width:1px;height:10px;background:#3a3a3a"></div>
<div class="a mono ln" style="top:425.15px;color:#6e7681">37</div>
<div class="a mono cl" style="top:425.15px">    <span style="color:#569cd6">const</span> <span style="color:#4fc1ff">params</span> = <span style="color:#da70d6">{</span></div>
<div class="a" style="left:696.00px;top:435px;width:16.44px;height:10px;background:rgba(255,255,64,0.065)"></div>
<div class="a" style="left:712.44px;top:435px;width:16.44px;height:10px;background:rgba(127,255,127,0.055)"></div>
<div class="a" style="left:696px;top:435px;width:1px;height:10px;background:#3a3a3a"></div>
<div class="a" style="left:712px;top:435px;width:1px;height:10px;background:#3a3a3a"></div>
<div class="a mono ln" style="top:435.30px;color:#6e7681">38</div>
<div class="a mono cl" style="top:435.30px">        <span style="color:#9cdcfe">app</span>: <span style="color:#4fc1ff">appId</span>,</div>
<div class="a" style="left:696.00px;top:445px;width:16.44px;height:10px;background:rgba(255,255,64,0.065)"></div>
<div class="a" style="left:712.44px;top:445px;width:16.44px;height:10px;background:rgba(127,255,127,0.055)"></div>
<div class="a" style="left:696px;top:445px;width:1px;height:10px;background:#3a3a3a"></div>
<div class="a" style="left:712px;top:445px;width:1px;height:10px;background:#3a3a3a"></div>
<div class="a mono ln" style="top:445.45px;color:#6e7681">39</div>
<div class="a mono cl" style="top:445.45px">        <span style="color:#4fc1ff">query</span>: <span style="color:#4fc1ff">query</span>,</div>
<div class="a" style="left:696.00px;top:455px;width:16.44px;height:10px;background:rgba(255,255,64,0.065)"></div>
<div class="a" style="left:712.44px;top:455px;width:16.44px;height:10px;background:rgba(127,255,127,0.055)"></div>
<div class="a" style="left:696px;top:455px;width:1px;height:10px;background:#3a3a3a"></div>
<div class="a" style="left:712px;top:455px;width:1px;height:10px;background:#3a3a3a"></div>
<div class="a mono ln" style="top:455.60px;color:#6e7681">40</div>
<div class="a mono cl" style="top:455.60px">        <span style="color:#9cdcfe">fields</span>: <span style="color:#179fff">[</span><span style="color:#ce9178">&#x27;date&#x27;</span>, <span style="color:#ce9178">&#x27;todo&#x27;</span><span style="color:#179fff">]</span></div>
<div class="a" style="left:696.00px;top:465px;width:16.44px;height:10px;background:rgba(255,255,64,0.065)"></div>
<div class="a" style="left:696px;top:465px;width:1px;height:10px;background:#3a3a3a"></div>
<div class="a mono ln" style="top:465.75px;color:#6e7681">41</div>
<div class="a mono cl" style="top:465.75px">    <span style="color:#da70d6">}</span>;</div>
<div class="a" style="left:696px;top:475px;width:1px;height:10px;background:#3a3a3a"></div>
<div class="a mono ln" style="top:475.90px;color:#6e7681">42</div>
<div class="a mono cl" style="top:475.90px"></div>
<div class="a" style="left:696.00px;top:485px;width:16.44px;height:11px;background:rgba(255,255,64,0.065)"></div>
<div class="a" style="left:696px;top:485px;width:1px;height:11px;background:#3a3a3a"></div>
<div class="a mono ln" style="top:486.05px;color:#6e7681">43</div>
<div class="a mono cl" style="top:486.05px">    <span style="color:#9cdcfe">kintone</span>.<span style="color:#dcdcaa">api</span><span style="color:#da70d6">(</span><span style="color:#9cdcfe">kintone</span>.<span style="color:#dcdcaa">api</span>.<span style="color:#dcdcaa">url</span><span style="color:#179fff">(</span><span style="color:#ce9178">&#x27;/k/v1/records&#x27;</span>, <span style="color:#569cd6">true</span><span style="color:#179fff">)</span>, <span style="color:#ce9178">&#x27;GET&#x27;</span>, <span style="color:#4fc1ff">params</span><span style="color:#da70d6">)</span></div>
<div class="a" style="left:696.00px;top:496px;width:16.44px;height:10px;background:rgba(255,255,64,0.065)"></div>
<div class="a" style="left:712.44px;top:496px;width:16.44px;height:10px;background:rgba(127,255,127,0.055)"></div>
<div class="a" style="left:696px;top:496px;width:1px;height:10px;background:#3a3a3a"></div>
<div class="a" style="left:712px;top:496px;width:1px;height:10px;background:#3a3a3a"></div>
<div class="a mono ln" style="top:496.20px;color:#6e7681">44</div>
<div class="a mono cl" style="top:496.20px">        .<span style="color:#dcdcaa">then</span><span style="color:#da70d6">(</span><span style="color:#569cd6">function</span> <span style="color:#179fff">(</span><span style="color:#9cdcfe">resp</span><span style="color:#179fff">)</span> <span style="color:#179fff">{</span></div>
<div class="a" style="left:696.00px;top:506px;width:16.44px;height:10px;background:rgba(255,255,64,0.065)"></div>
<div class="a" style="left:712.44px;top:506px;width:16.44px;height:10px;background:rgba(127,255,127,0.055)"></div>
<div class="a" style="left:728.88px;top:506px;width:16.44px;height:10px;background:rgba(255,127,255,0.055)"></div>
<div class="a" style="left:696px;top:506px;width:1px;height:10px;background:#3a3a3a"></div>
<div class="a" style="left:712px;top:506px;width:1px;height:10px;background:#3a3a3a"></div>
<div class="a" style="left:729px;top:506px;width:1px;height:10px;background:#3a3a3a"></div>
<div class="a mono ln" style="top:506.35px;color:#6e7681">45</div>
<div class="a mono cl" style="top:506.35px">            <span style="color:#569cd6">const</span> <span style="color:#4fc1ff">headers</span> = <span style="color:#ffd700">[</span><span style="color:#ce9178">&#x27;<span style="letter-spacing:.55px">日付</span>&#x27;</span>, <span style="color:#ce9178">&#x27;ToDo&#x27;</span><span style="color:#ffd700">]</span>;</div>
<div class="a" style="left:696px;top:516px;width:1px;height:10px;background:#3a3a3a"></div>
<div class="a" style="left:712px;top:516px;width:1px;height:10px;background:#3a3a3a"></div>
<div class="a" style="left:729px;top:516px;width:1px;height:10px;background:#3a3a3a"></div>
<div class="a mono ln" style="top:516.50px;color:#6e7681">46</div>
<div class="a mono cl" style="top:516.50px"></div>
<div class="a" style="left:696.00px;top:526px;width:16.44px;height:10px;background:rgba(255,255,64,0.065)"></div>
<div class="a" style="left:712.44px;top:526px;width:16.44px;height:10px;background:rgba(127,255,127,0.055)"></div>
<div class="a" style="left:728.88px;top:526px;width:16.44px;height:10px;background:rgba(255,127,255,0.055)"></div>
<div class="a" style="left:696px;top:526px;width:1px;height:10px;background:#3a3a3a"></div>
<div class="a" style="left:712px;top:526px;width:1px;height:10px;background:#3a3a3a"></div>
<div class="a" style="left:729px;top:526px;width:1px;height:10px;background:#3a3a3a"></div>
<div class="a mono ln" style="top:526.65px;color:#6e7681">47</div>
<div class="a mono cl" style="top:526.65px">            <span style="color:#569cd6">const</span> <span style="color:#4fc1ff">csvRows</span> = <span style="color:#9cdcfe">resp</span>.<span style="color:#9cdcfe">records</span>.<span style="color:#dcdcaa">map</span><span style="color:#ffd700">(</span><span style="color:#9cdcfe">record</span> <span style="color:#569cd6">=&gt;</span> <span style="color:#da70d6">{</span></div>
<div class="a" style="left:696.00px;top:536px;width:16.44px;height:10px;background:rgba(255,255,64,0.065)"></div>
<div class="a" style="left:712.44px;top:536px;width:16.44px;height:10px;background:rgba(127,255,127,0.055)"></div>
<div class="a" style="left:728.88px;top:536px;width:16.44px;height:10px;background:rgba(255,127,255,0.055)"></div>
<div class="a" style="left:745.32px;top:536px;width:16.44px;height:10px;background:rgba(79,236,236,0.055)"></div>
<div class="a" style="left:696px;top:536px;width:1px;height:10px;background:#3a3a3a"></div>
<div class="a" style="left:712px;top:536px;width:1px;height:10px;background:#3a3a3a"></div>
<div class="a" style="left:729px;top:536px;width:1px;height:10px;background:#3a3a3a"></div>
<div class="a" style="left:745px;top:536px;width:1px;height:10px;background:#3a3a3a"></div>
<div class="a mono ln" style="top:536.80px;color:#6e7681">48</div>
<div class="a mono cl" style="top:536.80px">                <span style="color:#c586c0">return</span> <span style="color:#179fff">[</span></div>
<div class="a" style="left:696.00px;top:546px;width:16.44px;height:10px;background:rgba(255,255,64,0.065)"></div>
<div class="a" style="left:712.44px;top:546px;width:16.44px;height:10px;background:rgba(127,255,127,0.055)"></div>
<div class="a" style="left:728.88px;top:546px;width:16.44px;height:10px;background:rgba(255,127,255,0.055)"></div>
<div class="a" style="left:745.32px;top:546px;width:16.44px;height:10px;background:rgba(79,236,236,0.055)"></div>
<div class="a" style="left:761.76px;top:546px;width:16.44px;height:10px;background:rgba(255,255,64,0.065)"></div>
<div class="a" style="left:696px;top:546px;width:1px;height:10px;background:#3a3a3a"></div>
<div class="a" style="left:712px;top:546px;width:1px;height:10px;background:#3a3a3a"></div>
<div class="a" style="left:729px;top:546px;width:1px;height:10px;background:#3a3a3a"></div>
<div class="a" style="left:745px;top:546px;width:1px;height:10px;background:#3a3a3a"></div>
<div class="a" style="left:762px;top:546px;width:1px;height:10px;background:#3a3a3a"></div>
<div class="a mono ln" style="top:546.95px;color:#6e7681">49</div>
<div class="a mono cl" style="top:546.95px">                    <span style="color:#9cdcfe">record</span>.<span style="color:#9cdcfe">date</span>.<span style="color:#9cdcfe">value</span>,</div>
<div class="a" style="left:696.00px;top:556px;width:16.44px;height:11px;background:rgba(255,255,64,0.065)"></div>
<div class="a" style="left:712.44px;top:556px;width:16.44px;height:11px;background:rgba(127,255,127,0.055)"></div>
<div class="a" style="left:728.88px;top:556px;width:16.44px;height:11px;background:rgba(255,127,255,0.055)"></div>
<div class="a" style="left:745.32px;top:556px;width:16.44px;height:11px;background:rgba(79,236,236,0.055)"></div>
<div class="a" style="left:761.76px;top:556px;width:16.44px;height:11px;background:rgba(255,255,64,0.065)"></div>
<div class="a" style="left:696px;top:556px;width:1px;height:11px;background:#3a3a3a"></div>
<div class="a" style="left:712px;top:556px;width:1px;height:11px;background:#3a3a3a"></div>
<div class="a" style="left:729px;top:556px;width:1px;height:11px;background:#3a3a3a"></div>
<div class="a" style="left:745px;top:556px;width:1px;height:11px;background:#3a3a3a"></div>
<div class="a" style="left:762px;top:556px;width:1px;height:11px;background:#3a3a3a"></div>
<div class="a mono ln" style="top:557.10px;color:#6e7681">50</div>
<div class="a mono cl" style="top:557.10px">                    <span style="color:#9cdcfe">record</span>.<span style="color:#9cdcfe">todo</span>.<span style="color:#9cdcfe">value</span></div>
<div class="a" style="left:695.00px;top:89.60px;width:308.00px;height:10.15px;border-top:1px solid #282828;border-bottom:1px solid #282828"></div>
<div class="a" style="left:958.74px;top:79.95px;width:4.71px;height:9.15px;border:1px solid #6a6a6a;background:rgba(0,100,0,.1)"></div>
<div class="a" style="left:712.14px;top:211.90px;width:4.71px;height:9.15px;border:1px solid #6a6a6a;background:rgba(0,100,0,.1)"></div>
<div class="a" style="left:963.15px;top:89.60px;width:1px;height:10.15px;background:#aeafad"></div><div class="a" style="left:1008.00px;top:49.00px;width:0.78px;height:1px;background:#d4d4d4;opacity:.7"></div>
<div class="a" style="left:1008.78px;top:49.00px;width:6.24px;height:1px;background:#569cd6;opacity:.7"></div>
<div class="a" style="left:1015.80px;top:49.00px;width:0.78px;height:1px;background:#d4d4d4;opacity:.7"></div>
<div class="a" style="left:1016.58px;top:49.00px;width:0.78px;height:1px;background:#d4d4d4;opacity:.7"></div>
<div class="a" style="left:1018.14px;top:49.00px;width:0.78px;height:1px;background:#d4d4d4;opacity:.7"></div>
<div class="a" style="left:1011.12px;top:50.07px;width:9.36px;height:1px;background:#ce9178;opacity:.7"></div>
<div class="a" style="left:1020.48px;top:50.07px;width:0.78px;height:1px;background:#d4d4d4;opacity:.7"></div>
<div class="a" style="left:1011.12px;top:52.21px;width:5.46px;height:1px;background:#9cdcfe;opacity:.7"></div>
<div class="a" style="left:1016.58px;top:52.21px;width:0.78px;height:1px;background:#d4d4d4;opacity:.7"></div>
<div class="a" style="left:1017.36px;top:52.21px;width:4.68px;height:1px;background:#9cdcfe;opacity:.7"></div>
<div class="a" style="left:1022.04px;top:52.21px;width:0.78px;height:1px;background:#d4d4d4;opacity:.7"></div>
<div class="a" style="left:1022.82px;top:52.21px;width:1.56px;height:1px;background:#dcdcaa;opacity:.7"></div>
<div class="a" style="left:1014.24px;top:53.28px;width:1.56px;height:1px;background:#c586c0;opacity:.7"></div>
<div class="a" style="left:1016.58px;top:53.28px;width:0.78px;height:1px;background:#d4d4d4;opacity:.7"></div>
<div class="a" style="left:1017.36px;top:53.28px;width:6.24px;height:1px;background:#9cdcfe;opacity:.7"></div>
<div class="a" style="left:1023.60px;top:53.28px;width:0.78px;height:1px;background:#d4d4d4;opacity:.7"></div>
<div class="a" style="left:1014.24px;top:55.42px;width:3.90px;height:1px;background:#569cd6;opacity:.7"></div>
<div class="a" style="left:1018.92px;top:55.42px;width:9.36px;height:1px;background:#4fc1ff;opacity:.7"></div>
<div class="a" style="left:1014.24px;top:56.49px;width:9.36px;height:1px;background:#4fc1ff;opacity:.7"></div>
<div class="a" style="left:1023.60px;top:56.49px;width:0.78px;height:1px;background:#d4d4d4;opacity:.7"></div>
<div class="a" style="left:1014.24px;top:57.56px;width:9.36px;height:1px;background:#4fc1ff;opacity:.7"></div>
<div class="a" style="left:1023.60px;top:57.56px;width:0.78px;height:1px;background:#d4d4d4;opacity:.7"></div>
<div class="a" style="left:1014.24px;top:59.70px;width:9.36px;height:1px;background:#4fc1ff;opacity:.7"></div>
<div class="a" style="left:1023.60px;top:59.70px;width:0.78px;height:1px;background:#d4d4d4;opacity:.7"></div>
<div class="a" style="left:1014.24px;top:61.84px;width:3.90px;height:1px;background:#569cd6;opacity:.7"></div>
<div class="a" style="left:1018.92px;top:61.84px;width:11.70px;height:1px;background:#4fc1ff;opacity:.7"></div>
<div class="a" style="left:1014.24px;top:62.91px;width:11.70px;height:1px;background:#4fc1ff;opacity:.7"></div>
<div class="a" style="left:1014.24px;top:65.05px;width:4.68px;height:1px;background:#c586c0;opacity:.7"></div>
<div class="a" style="left:1019.70px;top:65.05px;width:3.90px;height:1px;background:#9cdcfe;opacity:.7"></div>
<div class="a" style="left:1023.60px;top:65.05px;width:0.78px;height:1px;background:#d4d4d4;opacity:.7"></div>
<div class="a" style="left:1011.12px;top:66.12px;width:0.78px;height:1px;background:#d4d4d4;opacity:.7"></div>
<div class="a" style="left:1011.90px;top:66.12px;width:0.78px;height:1px;background:#d4d4d4;opacity:.7"></div>
<div class="a" style="left:1012.68px;top:66.12px;width:0.78px;height:1px;background:#d4d4d4;opacity:.7"></div>
<div class="a" style="left:1008.00px;top:67.19px;width:0.78px;height:1px;background:#d4d4d4;opacity:.7"></div>
<div class="a" style="left:1008.78px;top:67.19px;width:0.78px;height:1px;background:#d4d4d4;opacity:.7"></div>
<div class="a" style="left:1009.56px;top:67.19px;width:0.78px;height:1px;background:#d4d4d4;opacity:.7"></div>
<div class="a" style="left:1010.34px;top:67.19px;width:0.78px;height:1px;background:#d4d4d4;opacity:.7"></div>
<div class="a" style="left:1011.12px;top:67.19px;width:0.78px;height:1px;background:#d4d4d4;opacity:.7"></div>
<div class="a" style="left:1008.00px;top:69.33px;width:6.24px;height:1px;background:#569cd6;opacity:.7"></div>
<div class="a" style="left:1015.02px;top:69.33px;width:7.80px;height:1px;background:#dcdcaa;opacity:.7"></div>
<div class="a" style="left:1022.82px;top:69.33px;width:0.78px;height:1px;background:#d4d4d4;opacity:.7"></div>
<div class="a" style="left:1023.60px;top:69.33px;width:0.78px;height:1px;background:#d4d4d4;opacity:.7"></div>
<div class="a" style="left:1011.12px;top:70.40px;width:3.90px;height:1px;background:#569cd6;opacity:.7"></div>
<div class="a" style="left:1015.80px;top:70.40px;width:3.90px;height:1px;background:#4fc1ff;opacity:.7"></div>
<div class="a" style="left:1020.48px;top:70.40px;width:0.78px;height:1px;background:#d4d4d4;opacity:.7"></div>
<div class="a" style="left:1022.04px;top:70.40px;width:5.46px;height:1px;background:#9cdcfe;opacity:.7"></div>
<div class="a" style="left:1011.12px;top:72.54px;width:3.90px;height:1px;background:#569cd6;opacity:.7"></div>
<div class="a" style="left:1015.80px;top:72.54px;width:3.90px;height:1px;background:#4fc1ff;opacity:.7"></div>
<div class="a" style="left:1020.48px;top:72.54px;width:0.78px;height:1px;background:#d4d4d4;opacity:.7"></div>
<div class="a" style="left:1022.04px;top:72.54px;width:2.34px;height:1px;background:#569cd6;opacity:.7"></div>
<div class="a" style="left:1011.12px;top:73.61px;width:3.90px;height:1px;background:#569cd6;opacity:.7"></div>
<div class="a" style="left:1015.80px;top:73.61px;width:5.46px;height:1px;background:#4fc1ff;opacity:.7"></div>
<div class="a" style="left:1022.04px;top:73.61px;width:0.78px;height:1px;background:#d4d4d4;opacity:.7"></div>
<div class="a" style="left:1023.60px;top:73.61px;width:2.34px;height:1px;background:#569cd6;opacity:.7"></div>
<div class="a" style="left:1011.12px;top:74.68px;width:5.46px;height:1px;background:#4fc1ff;opacity:.7"></div>
<div class="a" style="left:1016.58px;top:74.68px;width:0.78px;height:1px;background:#d4d4d4;opacity:.7"></div>
<div class="a" style="left:1017.36px;top:74.68px;width:5.46px;height:1px;background:#dcdcaa;opacity:.7"></div>
<div class="a" style="left:1022.82px;top:74.68px;width:0.78px;height:1px;background:#d4d4d4;opacity:.7"></div>
<div class="a" style="left:1023.60px;top:74.68px;width:3.90px;height:1px;background:#4fc1ff;opacity:.7"></div>
<div class="a" style="left:1011.12px;top:76.82px;width:6.24px;height:1px;background:#569cd6;opacity:.7"></div>
<div class="a" style="left:1018.14px;top:76.82px;width:7.80px;height:1px;background:#dcdcaa;opacity:.7"></div>
<div class="a" style="left:1014.24px;top:77.89px;width:4.68px;height:1px;background:#c586c0;opacity:.7"></div>
<div class="a" style="left:1019.70px;top:77.89px;width:3.12px;height:1px;background:#9cdcfe;opacity:.7"></div>
<div class="a" style="left:1022.82px;top:77.89px;width:0.78px;height:1px;background:#d4d4d4;opacity:.7"></div>
<div class="a" style="left:1023.60px;top:77.89px;width:8.58px;height:1px;background:#dcdcaa;opacity:.7"></div>
<div class="a" style="left:1011.12px;top:78.96px;width:0.78px;height:1px;background:#d4d4d4;opacity:.7"></div>
<div class="a" style="left:1011.12px;top:81.10px;width:3.90px;height:1px;background:#569cd6;opacity:.7"></div>
<div class="a" style="left:1015.80px;top:81.10px;width:6.24px;height:1px;background:#4fc1ff;opacity:.7"></div>
<div class="a" style="left:1022.82px;top:81.10px;width:0.78px;height:1px;background:#d4d4d4;opacity:.7"></div>
<div class="a" style="left:1011.12px;top:82.17px;width:3.90px;height:1px;background:#569cd6;opacity:.7"></div>
<div class="a" style="left:1015.80px;top:82.17px;width:4.68px;height:1px;background:#4fc1ff;opacity:.7"></div>
<div class="a" style="left:1021.26px;top:82.17px;width:0.78px;height:1px;background:#d4d4d4;opacity:.7"></div>
<div class="a" style="left:1022.82px;top:82.17px;width:7.80px;height:1px;background:#dcdcaa;opacity:.7"></div>
<div class="a" style="left:1011.12px;top:84.31px;width:16.38px;height:1px;background:#6a9955;opacity:.7"></div>
<div class="a" style="left:1011.12px;top:85.38px;width:3.90px;height:1px;background:#569cd6;opacity:.7"></div>
<div class="a" style="left:1015.80px;top:85.38px;width:3.90px;height:1px;background:#4fc1ff;opacity:.7"></div>
<div class="a" style="left:1020.48px;top:85.38px;width:0.78px;height:1px;background:#d4d4d4;opacity:.7"></div>
<div class="a" style="left:1022.04px;top:85.38px;width:43.68px;height:1px;background:#ce9178;opacity:.7"></div>
<div class="a" style="left:1011.12px;top:87.52px;width:3.90px;height:1px;background:#569cd6;opacity:.7"></div>
<div class="a" style="left:1015.80px;top:87.52px;width:4.68px;height:1px;background:#4fc1ff;opacity:.7"></div>
<div class="a" style="left:1021.26px;top:87.52px;width:0.78px;height:1px;background:#d4d4d4;opacity:.7"></div>
<div class="a" style="left:1022.82px;top:87.52px;width:0.78px;height:1px;background:#d4d4d4;opacity:.7"></div>
<div class="a" style="left:1014.24px;top:88.59px;width:2.34px;height:1px;background:#9cdcfe;opacity:.7"></div>
<div class="a" style="left:1016.58px;top:88.59px;width:0.78px;height:1px;background:#d4d4d4;opacity:.7"></div>
<div class="a" style="left:1018.14px;top:88.59px;width:3.90px;height:1px;background:#4fc1ff;opacity:.7"></div>
<div class="a" style="left:1022.04px;top:88.59px;width:0.78px;height:1px;background:#d4d4d4;opacity:.7"></div>
<div class="a" style="left:1014.24px;top:89.66px;width:3.90px;height:1px;background:#4fc1ff;opacity:.7"></div>
<div class="a" style="left:1018.14px;top:89.66px;width:0.78px;height:1px;background:#d4d4d4;opacity:.7"></div>
<div class="a" style="left:1019.70px;top:89.66px;width:3.90px;height:1px;background:#4fc1ff;opacity:.7"></div>
<div class="a" style="left:1023.60px;top:89.66px;width:0.78px;height:1px;background:#d4d4d4;opacity:.7"></div>
<div class="a" style="left:1014.24px;top:90.73px;width:4.68px;height:1px;background:#9cdcfe;opacity:.7"></div>
<div class="a" style="left:1018.92px;top:90.73px;width:0.78px;height:1px;background:#d4d4d4;opacity:.7"></div>
<div class="a" style="left:1020.48px;top:90.73px;width:0.78px;height:1px;background:#d4d4d4;opacity:.7"></div>
<div class="a" style="left:1021.26px;top:90.73px;width:4.68px;height:1px;background:#ce9178;opacity:.7"></div>
<div class="a" style="left:1011.12px;top:91.80px;width:0.78px;height:1px;background:#d4d4d4;opacity:.7"></div>
<div class="a" style="left:1011.90px;top:91.80px;width:0.78px;height:1px;background:#d4d4d4;opacity:.7"></div>
<div class="a" style="left:1011.12px;top:93.94px;width:5.46px;height:1px;background:#9cdcfe;opacity:.7"></div>
<div class="a" style="left:1016.58px;top:93.94px;width:0.78px;height:1px;background:#d4d4d4;opacity:.7"></div>
<div class="a" style="left:1017.36px;top:93.94px;width:2.34px;height:1px;background:#dcdcaa;opacity:.7"></div>
<div class="a" style="left:1019.70px;top:93.94px;width:0.78px;height:1px;background:#d4d4d4;opacity:.7"></div>
<div class="a" style="left:1020.48px;top:93.94px;width:5.46px;height:1px;background:#9cdcfe;opacity:.7"></div>
<div class="a" style="left:1014.24px;top:95.01px;width:0.78px;height:1px;background:#d4d4d4;opacity:.7"></div>
<div class="a" style="left:1015.02px;top:95.01px;width:3.12px;height:1px;background:#dcdcaa;opacity:.7"></div>
<div class="a" style="left:1018.14px;top:95.01px;width:0.78px;height:1px;background:#d4d4d4;opacity:.7"></div>
<div class="a" style="left:1018.92px;top:95.01px;width:6.24px;height:1px;background:#569cd6;opacity:.7"></div>
<div class="a" style="left:1017.36px;top:96.08px;width:3.90px;height:1px;background:#569cd6;opacity:.7"></div>
<div class="a" style="left:1022.04px;top:96.08px;width:5.46px;height:1px;background:#4fc1ff;opacity:.7"></div>
<div class="a" style="left:1017.36px;top:98.22px;width:3.90px;height:1px;background:#569cd6;opacity:.7"></div>
<div class="a" style="left:1022.04px;top:98.22px;width:5.46px;height:1px;background:#4fc1ff;opacity:.7"></div>
<div class="a" style="left:1020.48px;top:99.29px;width:4.68px;height:1px;background:#c586c0;opacity:.7"></div>
<div class="a" style="left:1023.60px;top:100.36px;width:4.68px;height:1px;background:#9cdcfe;opacity:.7"></div>
<div class="a" style="left:1023.60px;top:101.43px;width:4.68px;height:1px;background:#9cdcfe;opacity:.7"></div>
<div class="a" style="left:1020.48px;top:102.50px;width:0.78px;height:1px;background:#d4d4d4;opacity:.7"></div>
<div class="a" style="left:1021.26px;top:102.50px;width:0.78px;height:1px;background:#d4d4d4;opacity:.7"></div>
<div class="a" style="left:1017.36px;top:103.57px;width:0.78px;height:1px;background:#d4d4d4;opacity:.7"></div>
<div class="a" style="left:1018.14px;top:103.57px;width:0.78px;height:1px;background:#d4d4d4;opacity:.7"></div>
<div class="a" style="left:1018.92px;top:103.57px;width:0.78px;height:1px;background:#d4d4d4;opacity:.7"></div>
<div class="a" style="left:1017.36px;top:105.71px;width:3.90px;height:1px;background:#569cd6;opacity:.7"></div>
<div class="a" style="left:1022.04px;top:105.71px;width:7.80px;height:1px;background:#9cdcfe;opacity:.7"></div>
<div class="a" style="left:1020.48px;top:106.78px;width:0.78px;height:1px;background:#d4d4d4;opacity:.7"></div>
<div class="a" style="left:1021.26px;top:106.78px;width:2.34px;height:1px;background:#dcdcaa;opacity:.7"></div>
<div class="a" style="left:1023.60px;top:106.78px;width:0.78px;height:1px;background:#d4d4d4;opacity:.7"></div>
<div class="a" style="left:1020.48px;top:107.85px;width:0.78px;height:1px;background:#d4d4d4;opacity:.7"></div>
<div class="a" style="left:1021.26px;top:107.85px;width:3.12px;height:1px;background:#9cdcfe;opacity:.7"></div>
<div class="a" style="left:1017.36px;top:109.99px;width:3.90px;height:1px;background:#569cd6;opacity:.7"></div>
<div class="a" style="left:1022.04px;top:109.99px;width:2.34px;height:1px;background:#9cdcfe;opacity:.7"></div>
<div class="a" style="left:1017.36px;top:111.06px;width:3.90px;height:1px;background:#569cd6;opacity:.7"></div>
<div class="a" style="left:1022.04px;top:111.06px;width:3.12px;height:1px;background:#9cdcfe;opacity:.7"></div>
<div class="a" style="left:1017.36px;top:112.13px;width:3.90px;height:1px;background:#569cd6;opacity:.7"></div>
<div class="a" style="left:1022.04px;top:112.13px;width:2.34px;height:1px;background:#dcdcaa;opacity:.7"></div>
<div class="a" style="left:1017.36px;top:114.27px;width:3.90px;height:1px;background:#569cd6;opacity:.7"></div>
<div class="a" style="left:1022.04px;top:114.27px;width:0.78px;height:1px;background:#9cdcfe;opacity:.7"></div>
<div class="a" style="left:1023.60px;top:114.27px;width:0.78px;height:1px;background:#d4d4d4;opacity:.7"></div>
<div class="a" style="left:1017.36px;top:115.34px;width:0.78px;height:1px;background:#9cdcfe;opacity:.7"></div>
<div class="a" style="left:1018.14px;top:115.34px;width:0.78px;height:1px;background:#d4d4d4;opacity:.7"></div>
<div class="a" style="left:1018.92px;top:115.34px;width:3.12px;height:1px;background:#9cdcfe;opacity:.7"></div>
<div class="a" style="left:1022.82px;top:115.34px;width:0.78px;height:1px;background:#d4d4d4;opacity:.7"></div>
<div class="a" style="left:1017.36px;top:116.41px;width:0.78px;height:1px;background:#9cdcfe;opacity:.7"></div>
<div class="a" style="left:1018.14px;top:116.41px;width:0.78px;height:1px;background:#d4d4d4;opacity:.7"></div>
<div class="a" style="left:1018.92px;top:116.41px;width:6.24px;height:1px;background:#9cdcfe;opacity:.7"></div>
<div class="a" style="left:1017.36px;top:117.48px;width:0.78px;height:1px;background:#9cdcfe;opacity:.7"></div>
<div class="a" style="left:1018.14px;top:117.48px;width:0.78px;height:1px;background:#d4d4d4;opacity:.7"></div>
<div class="a" style="left:1018.92px;top:117.48px;width:3.90px;height:1px;background:#9cdcfe;opacity:.7"></div>
<div class="a" style="left:1022.82px;top:117.48px;width:0.78px;height:1px;background:#d4d4d4;opacity:.7"></div>
<div class="a" style="left:1023.60px;top:117.48px;width:0.78px;height:1px;background:#d4d4d4;opacity:.7"></div>
<div class="a" style="left:1017.36px;top:119.62px;width:2.34px;height:1px;background:#9cdcfe;opacity:.7"></div>
<div class="a" style="left:1019.70px;top:119.62px;width:0.78px;height:1px;background:#d4d4d4;opacity:.7"></div>
<div class="a" style="left:1020.48px;top:119.62px;width:11.70px;height:1px;background:#9cdcfe;opacity:.7"></div>
<div class="a" style="left:1014.24px;top:120.69px;width:0.78px;height:1px;background:#d4d4d4;opacity:.7"></div>
<div class="a" style="left:1015.02px;top:120.69px;width:0.78px;height:1px;background:#d4d4d4;opacity:.7"></div>
<div class="a" style="left:1014.24px;top:121.76px;width:0.78px;height:1px;background:#d4d4d4;opacity:.7"></div>
<div class="a" style="left:1015.02px;top:121.76px;width:3.90px;height:1px;background:#9cdcfe;opacity:.7"></div>
<div class="a" style="left:1018.92px;top:121.76px;width:0.78px;height:1px;background:#d4d4d4;opacity:.7"></div>
<div class="a" style="left:1019.70px;top:121.76px;width:6.24px;height:1px;background:#569cd6;opacity:.7"></div>
<div class="a" style="left:1017.36px;top:122.83px;width:5.46px;height:1px;background:#9cdcfe;opacity:.7"></div>
<div class="a" style="left:1022.82px;top:122.83px;width:0.78px;height:1px;background:#d4d4d4;opacity:.7"></div>
<div class="a" style="left:1023.60px;top:122.83px;width:3.90px;height:1px;background:#9cdcfe;opacity:.7"></div>
<div class="a" style="left:1017.36px;top:123.90px;width:3.90px;height:1px;background:#9cdcfe;opacity:.7"></div>
<div class="a" style="left:1021.26px;top:123.90px;width:0.78px;height:1px;background:#d4d4d4;opacity:.7"></div>
<div class="a" style="left:1022.04px;top:123.90px;width:5.46px;height:1px;background:#ce9178;opacity:.7"></div>
<div class="a" style="left:1014.24px;top:124.97px;width:0.78px;height:1px;background:#d4d4d4;opacity:.7"></div>
<div class="a" style="left:1015.02px;top:124.97px;width:0.78px;height:1px;background:#d4d4d4;opacity:.7"></div>
<div class="a" style="left:1015.80px;top:124.97px;width:0.78px;height:1px;background:#d4d4d4;opacity:.7"></div>
<div class="a" style="left:1008.00px;top:126.04px;width:0.78px;height:1px;background:#d4d4d4;opacity:.7"></div>
</body></html>
